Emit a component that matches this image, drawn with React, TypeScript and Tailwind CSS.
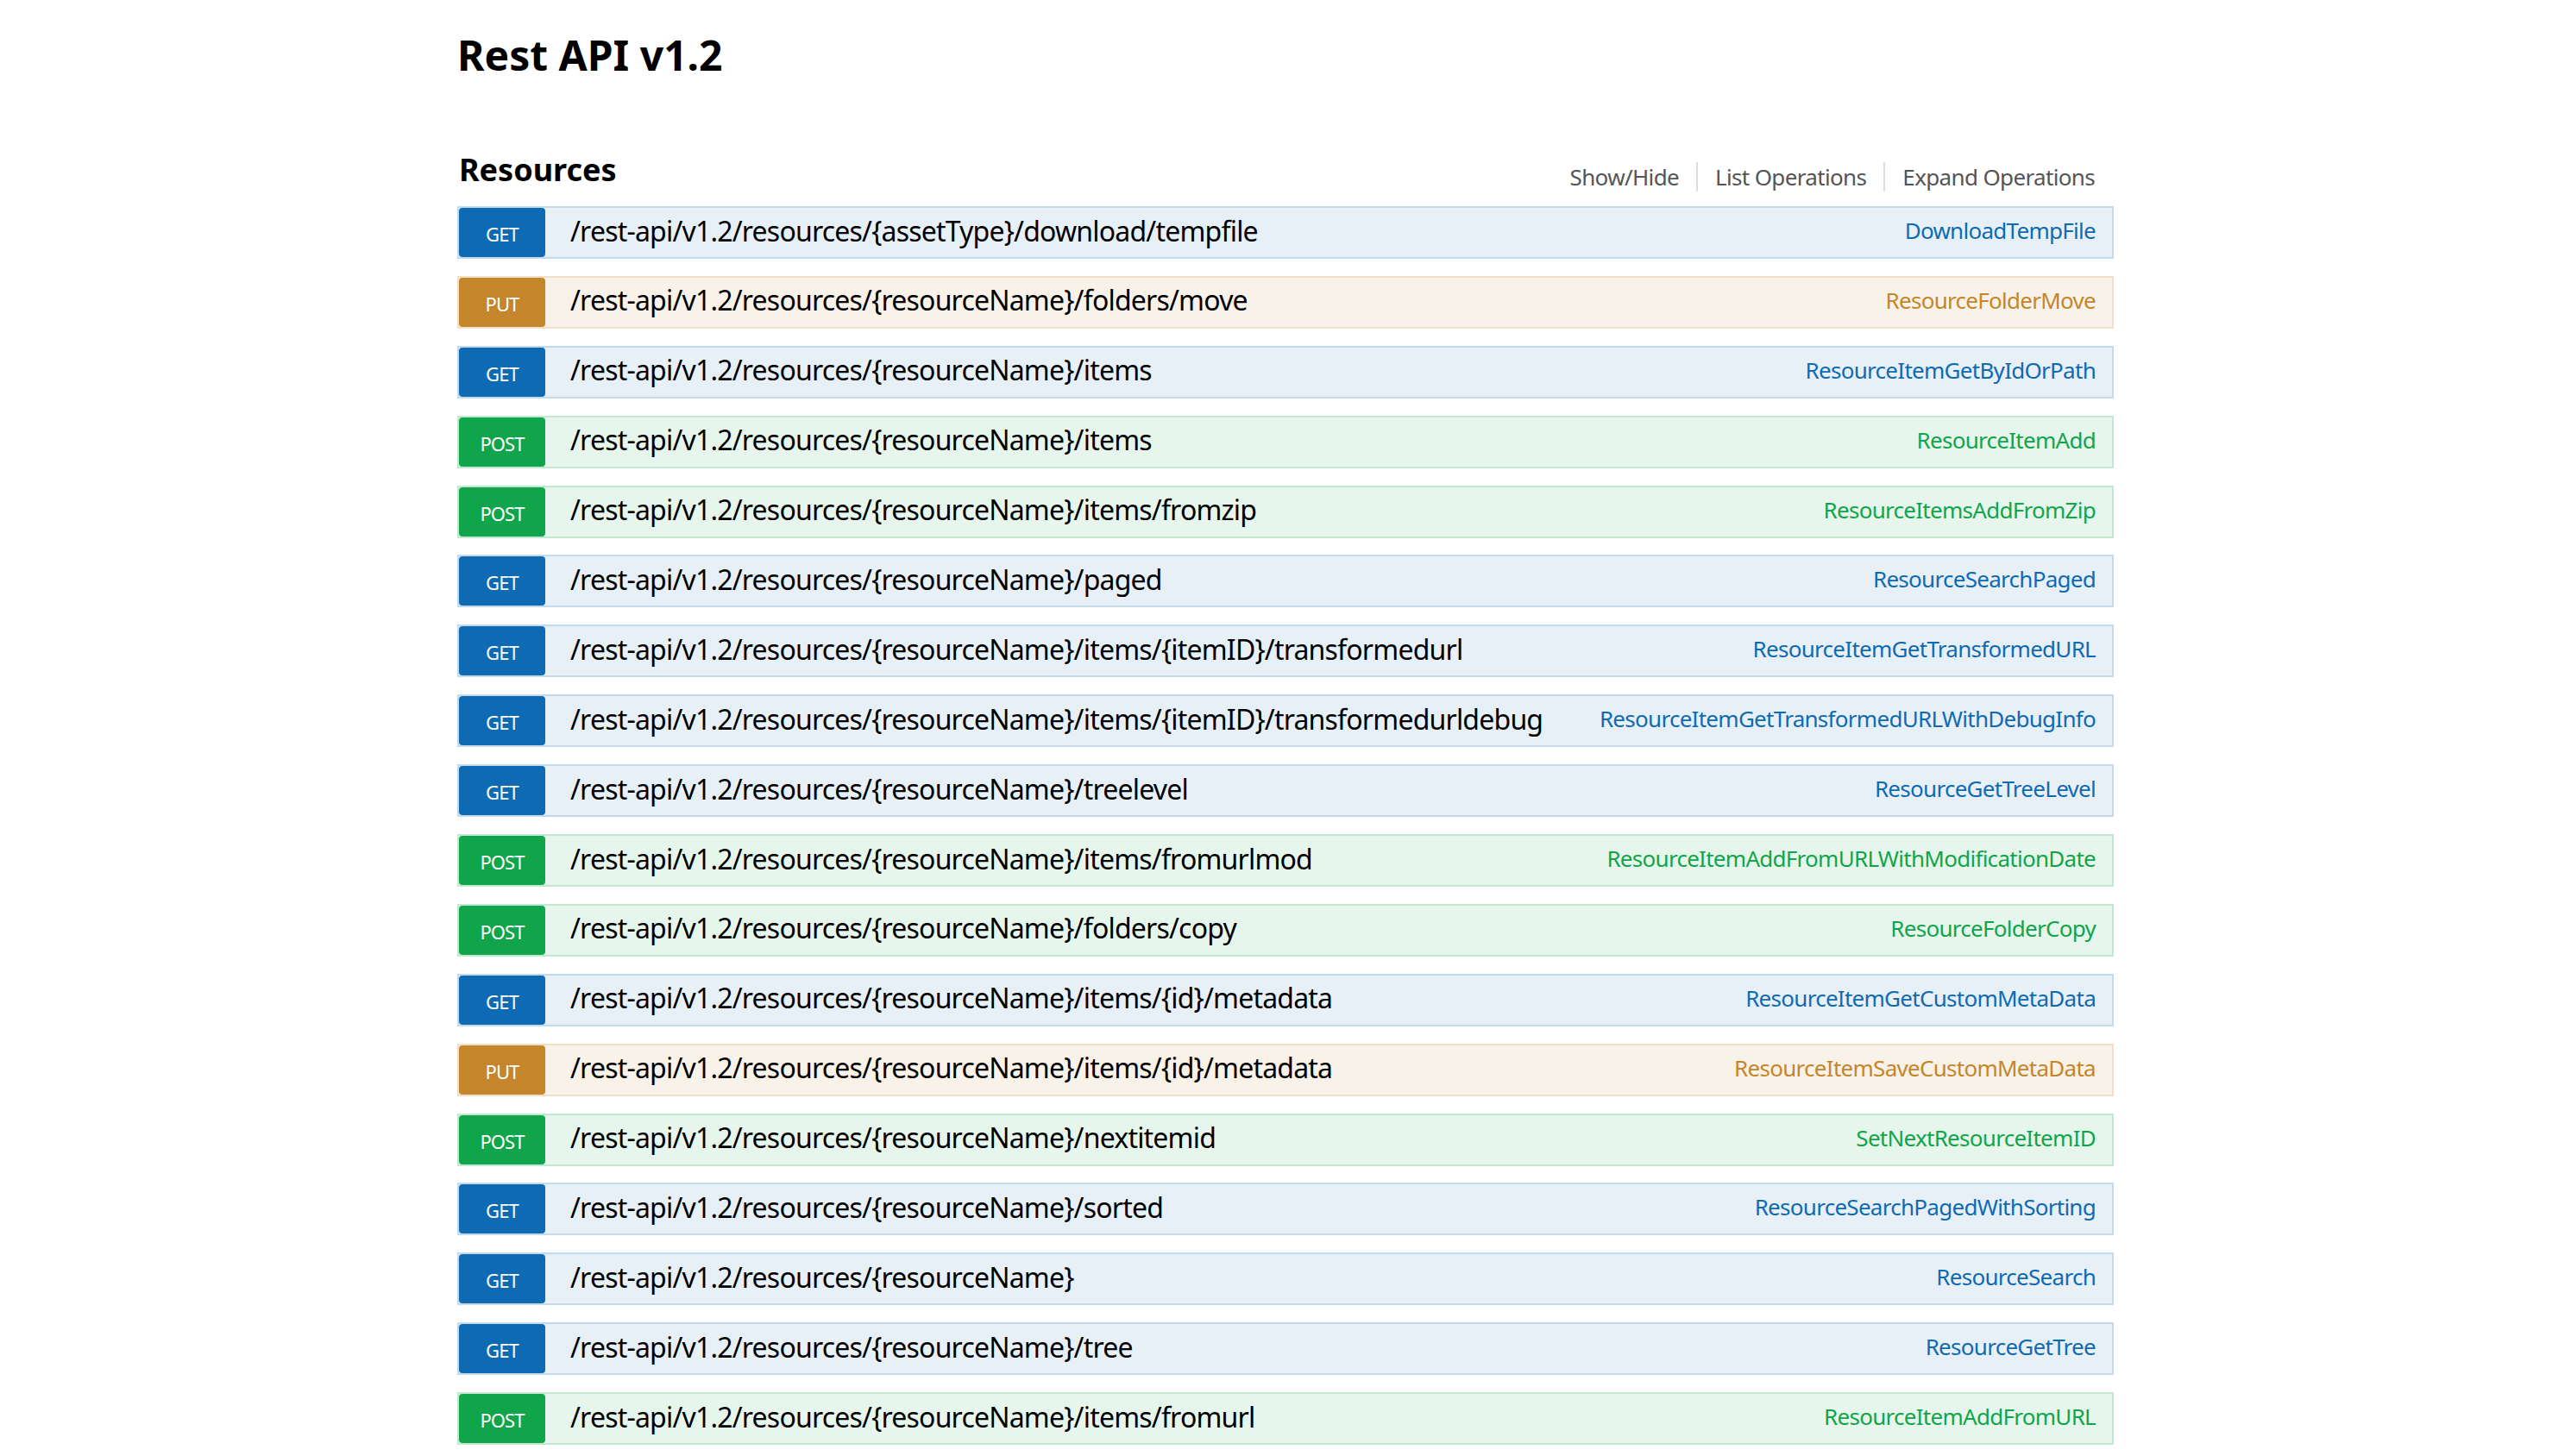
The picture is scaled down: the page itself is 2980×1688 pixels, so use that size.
import React from "react";

type Method = "GET" | "PUT" | "POST";

const ops: { m: Method; path: string; name: string }[] = [
  { m: "GET", path: "/rest-api/v1.2/resources/{assetType}/download/tempfile", name: "DownloadTempFile" },
  { m: "PUT", path: "/rest-api/v1.2/resources/{resourceName}/folders/move", name: "ResourceFolderMove" },
  { m: "GET", path: "/rest-api/v1.2/resources/{resourceName}/items", name: "ResourceItemGetByIdOrPath" },
  { m: "POST", path: "/rest-api/v1.2/resources/{resourceName}/items", name: "ResourceItemAdd" },
  { m: "POST", path: "/rest-api/v1.2/resources/{resourceName}/items/fromzip", name: "ResourceItemsAddFromZip" },
  { m: "GET", path: "/rest-api/v1.2/resources/{resourceName}/paged", name: "ResourceSearchPaged" },
  { m: "GET", path: "/rest-api/v1.2/resources/{resourceName}/items/{itemID}/transformedurl", name: "ResourceItemGetTransformedURL" },
  { m: "GET", path: "/rest-api/v1.2/resources/{resourceName}/items/{itemID}/transformedurldebug", name: "ResourceItemGetTransformedURLWithDebugInfo" },
  { m: "GET", path: "/rest-api/v1.2/resources/{resourceName}/treelevel", name: "ResourceGetTreeLevel" },
  { m: "POST", path: "/rest-api/v1.2/resources/{resourceName}/items/fromurlmod", name: "ResourceItemAddFromURLWithModificationDate" },
  { m: "POST", path: "/rest-api/v1.2/resources/{resourceName}/folders/copy", name: "ResourceFolderCopy" },
  { m: "GET", path: "/rest-api/v1.2/resources/{resourceName}/items/{id}/metadata", name: "ResourceItemGetCustomMetaData" },
  { m: "PUT", path: "/rest-api/v1.2/resources/{resourceName}/items/{id}/metadata", name: "ResourceItemSaveCustomMetaData" },
  { m: "POST", path: "/rest-api/v1.2/resources/{resourceName}/nextitemid", name: "SetNextResourceItemID" },
  { m: "GET", path: "/rest-api/v1.2/resources/{resourceName}/sorted", name: "ResourceSearchPagedWithSorting" },
  { m: "GET", path: "/rest-api/v1.2/resources/{resourceName}", name: "ResourceSearch" },
  { m: "GET", path: "/rest-api/v1.2/resources/{resourceName}/tree", name: "ResourceGetTree" },
  { m: "POST", path: "/rest-api/v1.2/resources/{resourceName}/items/fromurl", name: "ResourceItemAddFromURL" },
];

const styles: Record<Method, { row: string; badge: string; name: string }> = {
  GET: {
    row: "bg-[#e7f0f7] border-[#c3d9ec]",
    badge: "bg-[#0f6ab4]",
    name: "text-[#0f6ab4]",
  },
  PUT: {
    row: "bg-[#f9f2e9] border-[#f0e0ca]",
    badge: "bg-[#c5862b]",
    name: "text-[#c5862b]",
  },
  POST: {
    row: "bg-[#e7f6ec] border-[#c3e8d1]",
    badge: "bg-[#10a54a]",
    name: "text-[#10a54a]",
  },
};

export default function App() {
  return (
    <div
      className="min-h-screen bg-white"
      style={{ fontFamily: '"Noto Sans", "Open Sans", sans-serif' }}
    >
      <div className="mx-auto w-[1920px] pt-[32px]">
        <h1 className="text-[48px] leading-[64px] font-bold text-black">Rest API v1.2</h1>

        <div className="mt-[77px] flex h-[66px] items-start justify-between">
          <h2 className="ml-[2px] text-[36px] leading-[48px] font-bold text-black">Resources</h2>
          <ul className="mt-[15px] flex text-[26px] leading-[34px] tracking-[-0.65px] text-[#555555]">
            <li className="border-r-2 border-[#dddddd] px-[20px]">Show/Hide</li>
            <li className="border-r-2 border-[#dddddd] px-[20px]">List Operations</li>
            <li className="pl-[20px] pr-[22px]">Expand Operations</li>
          </ul>
        </div>

        <div className="flex flex-col gap-[19.9px]">
          {ops.map((op, i) => {
            const s = styles[op.m];
            return (
              <div key={i} className={`flex h-[61px] items-center border-2 ${s.row}`}>
                <div
                  className={`flex h-[57px] w-[100px] shrink-0 items-center justify-center rounded-[4px] pt-[4px] text-[22px] tracking-[-0.9px] text-white ${s.badge}`}
                >
                  {op.m}
                </div>
                <div className="pb-[4px] pl-[29px] text-[32px] leading-[44px] tracking-[-0.8px] text-black whitespace-nowrap">
                  {op.path}
                </div>
                <div
                  className={`ml-auto pb-[5px] pr-[19px] text-[26px] leading-[34px] tracking-[-0.72px] whitespace-nowrap ${s.name}`}
                >
                  {op.name}
                </div>
              </div>
            );
          })}
        </div>
      </div>
    </div>
  );
}
